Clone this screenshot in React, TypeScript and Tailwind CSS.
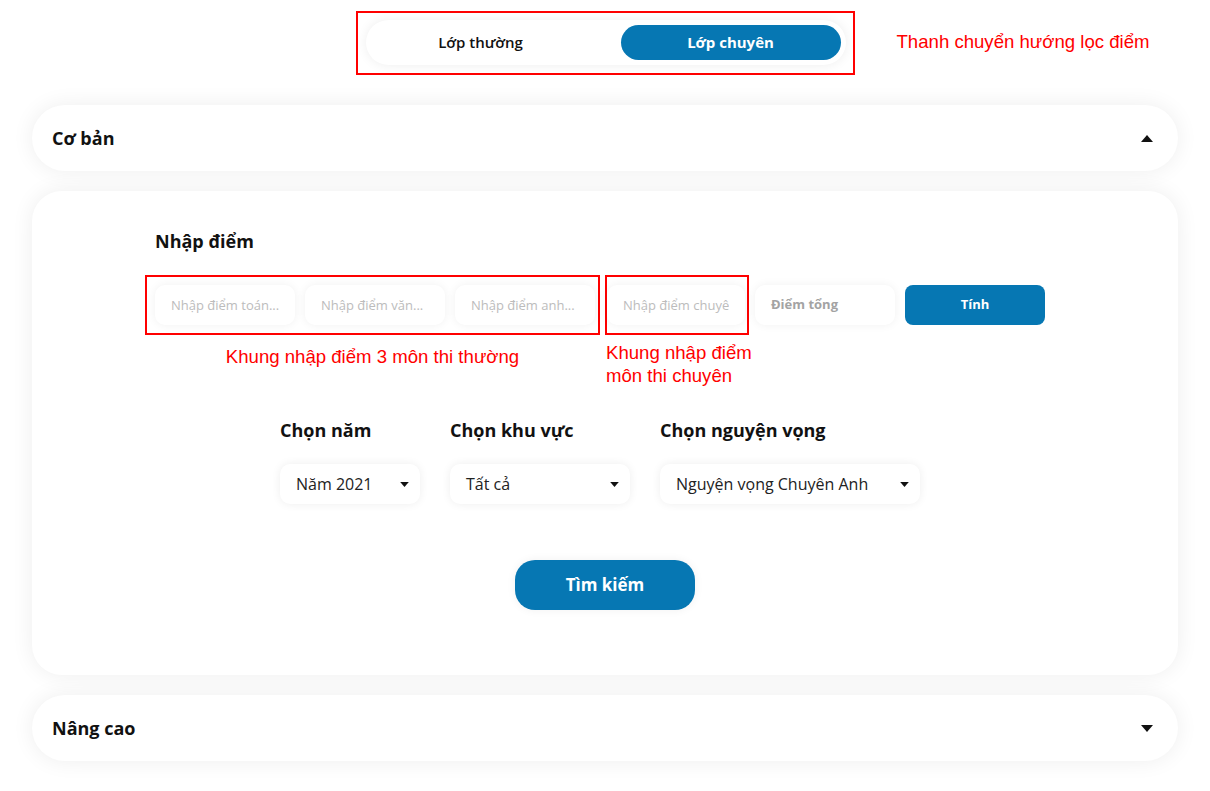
const font = "font-['Open_Sans','Noto_Sans',sans-serif]";
const card = "bg-white shadow-[0_0_22px_rgba(0,0,0,0.07)]";
const inputCls =
  "h-[40px] rounded-[10px] bg-white shadow-[0_0_10px_rgba(0,0,0,0.06)] px-4 text-[13px] text-[#222] placeholder:text-[#bcbcbc] outline-none";
const note = "font-['Liberation_Sans',Arial,sans-serif] text-[18.6px] text-[#ff0000] whitespace-nowrap";
const heading = "text-[18px] leading-[24px] font-bold text-[#111]";

function Caret({ up = false, size = "w-[12px] h-[7px]" }: { up?: boolean; size?: string }) {
  return (
    <svg viewBox="0 0 12 7" className={size}>
      <path d={up ? "M0 7 L6 0 L12 7 Z" : "M0 0 L12 0 L6 7 Z"} fill="#111" />
    </svg>
  );
}

function Select({ value, width }: { value: string; width: string }) {
  return (
    <div
      className={`${width} h-[40px] rounded-[10px] bg-white shadow-[0_0_10px_rgba(0,0,0,0.07)] flex items-center justify-between pl-4 pr-[11px] text-[16px] text-[#222]`}
    >
      <span>{value}</span>
      <Caret size="w-[9px] h-[5px]" />
    </div>
  );
}

export default function App() {
  return (
    <div className={`${font} min-h-[791px] bg-white px-8 pt-[11px] pb-[30px]`}>
      {/* tab switcher */}
      <div className="grid grid-cols-[1fr_auto_1fr] items-center">
        <div />
        <div className="border-2 border-[#ff0000] pl-2 pr-[7px] pt-[7px] pb-2">
          <div className="w-[480px] h-[45px] rounded-full bg-white shadow-[0_0_12px_rgba(0,0,0,0.07)] p-[5px] flex justify-between">
            <button className="w-[220px] h-[35px] rounded-full text-[15px] font-semibold text-[#111]">
              Lớp thường
            </button>
            <button className="w-[220px] h-[35px] rounded-full bg-[#0677b3] text-[15px] font-bold text-white">
              Lớp chuyên
            </button>
          </div>
        </div>
        <div className={`${note} ml-[42px] -mt-[2px]`}>Thanh chuyển hướng lọc điểm</div>
      </div>

      {/* Cơ bản */}
      <div className={`${card} mt-[30px] h-[66px] rounded-[33px] flex items-center justify-between pl-5 pr-[25px]`}>
        <span className="text-[18px] font-bold text-[#111]">Cơ bản</span>
        <Caret up />
      </div>

      <div className={`${card} mt-5 rounded-[30px] pt-[38px] pb-[65px]`}>
        <div className={`pl-[123px] ${heading}`}>Nhập điểm</div>

        <div className="mt-[22px] pl-[113px] flex items-start">
          <div className="flex flex-col items-center">
            <div className="border-2 border-[#ff0000] pl-2 pr-[3px] py-2 flex gap-[10px]">
              <input className={`${inputCls} w-[140px]`} placeholder="Nhập điểm toán..." />
              <input className={`${inputCls} w-[140px]`} placeholder="Nhập điểm văn..." />
              <input className={`${inputCls} w-[140px]`} placeholder="Nhập điểm anh..." />
            </div>
            <div className={`${note} mt-[10px] leading-[23px]`}>Khung nhập điểm 3 môn thi thường</div>
          </div>
          <div className="ml-[5px] w-[144px] flex flex-col">
            <div className="border-2 border-[#ff0000] pr-[2px] py-2">
              <input className={`${inputCls} w-[138px] px-3`} placeholder="Nhập điểm chuyên" />
            </div>
            <div className={`${note} mt-[6px] leading-[23px] pl-px`}>
              Khung nhập điểm
              <br />
              môn thi chuyên
            </div>
          </div>
          <div className="ml-[6px] mt-[10px] w-[140px] h-[40px] rounded-[10px] bg-white shadow-[0_0_10px_rgba(0,0,0,0.06)] flex items-center px-4 text-[13px] font-bold text-[#a3a3a3]">
            Điểm tổng
          </div>
          <button className="ml-[10px] mt-[10px] w-[140px] h-[40px] rounded-[8px] bg-[#0677b3] text-white text-[13px] font-bold">
            Tính
          </button>
        </div>

        <div className="mt-[31px] pl-[248px] flex gap-[30px]">
          <div className="flex flex-col gap-[22px]">
            <span className={heading}>Chọn năm</span>
            <Select value="Năm 2021" width="w-[140px]" />
          </div>
          <div className="flex flex-col gap-[22px]">
            <span className={heading}>Chọn khu vực</span>
            <Select value="Tất cả" width="w-[180px]" />
          </div>
          <div className="flex flex-col gap-[22px]">
            <span className={heading}>Chọn nguyện vọng</span>
            <Select value="Nguyện vọng Chuyên Anh" width="w-[260px]" />
          </div>
        </div>

        <div className="mt-[56px] flex justify-center">
          <button className="w-[180px] h-[50px] rounded-[20px] bg-[#0677b3] text-white text-[17px] font-bold shadow-[0_0_10px_rgba(0,0,0,0.06)]">
            Tìm kiếm
          </button>
        </div>
      </div>

      {/* Nâng cao */}
      <div className={`${card} mt-5 h-[66px] rounded-[33px] flex items-center justify-between pl-5 pr-[25px]`}>
        <span className="text-[18px] font-bold text-[#111]">Nâng cao</span>
        <Caret />
      </div>
    </div>
  );
}
